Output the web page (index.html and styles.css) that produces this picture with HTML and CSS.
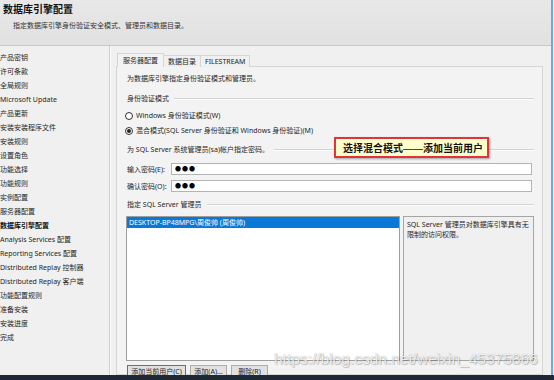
FILE: index.html
```html
<!DOCTYPE html>
<html lang="zh-CN">
<head>
<meta charset="utf-8">
<title>数据库引擎配置</title>
<link rel="stylesheet" href="styles.css">
</head>
<body>
<div class="screen">
  <div class="window">
    <header class="hdr">
      <h1>数据库引擎配置</h1>
      <p>指定数据库引擎身份验证安全模式、管理员和数据目录。</p>
    </header>
    <div class="main">
      <ul class="side">
        <li>产品密钥</li>
        <li>许可条款</li>
        <li>全局规则</li>
        <li>Microsoft Update</li>
        <li>产品更新</li>
        <li>安装安装程序文件</li>
        <li>安装规则</li>
        <li>设置角色</li>
        <li>功能选择</li>
        <li>功能规则</li>
        <li>实例配置</li>
        <li>服务器配置</li>
        <li class="cur">数据库引擎配置</li>
        <li>Analysis Services 配置</li>
        <li>Reporting Services 配置</li>
        <li>Distributed Replay 控制器</li>
        <li>Distributed Replay 客户端</li>
        <li>功能配置规则</li>
        <li>准备安装</li>
        <li>安装进度</li>
        <li>完成</li>
      </ul>
      <section class="content">
        <div class="tabs">
          <div class="tab active">服务器配置</div>
          <div class="tab">数据目录</div>
          <div class="tab">FILESTREAM</div>
        </div>
        <div class="panel">
          <p class="intro">为数据库引擎指定身份验证模式和管理员。</p>
          <div class="grp g1"><span>身份验证模式</span><i></i></div>
          <div class="radio r1"><b class="dot"></b><span>Windows 身份验证模式(W)</span></div>
          <div class="radio r2"><b class="dot on"></b><span>混合模式(SQL Server 身份验证和 Windows 身份验证)(M)</span></div>
          <div class="grp g2"><span>为 SQL Server 系统管理员(sa)帐户指定密码。</span><i></i></div>
          <div class="field f1"><label>输入密码(E):</label><div class="input">●●●</div></div>
          <div class="field f2"><label>确认密码(O):</label><div class="input">●●●</div></div>
          <div class="grp g3"><span>指定 SQL Server 管理员</span><i></i></div>
          <div class="admin">
            <div class="list"><div class="sel">DESKTOP-BP48MPG\周俊帅 (周俊帅)</div></div>
            <div class="desc">SQL Server 管理员对数据库引擎具有无限制的访问权限。</div>
          </div>
          <div class="btns">
            <div class="btn focus">添加当前用户(C)</div>
            <div class="btn">添加(A)...</div>
            <div class="btn">删除(R)</div>
          </div>
        </div>
      </section>
    </div>
  </div>
  <div class="taskbar"></div>
  <div class="callout">选择混合模式<span class="dash">——</span>添加当前用户</div>
  <div class="watermark">https://blog.csdn.net/weixin_45375866</div>
</div>
</body>
</html>
```
FILE: styles.css
```css
* { box-sizing: border-box; }
html, body { margin: 0; padding: 0; }
body {
  width: 554px;
  height: 380px;
  overflow: hidden;
  background: #f0f0f0;
  font-family: "Noto Sans", "Noto Sans CJK SC", sans-serif;
  font-size: 7px;
  color: #1f1f1f;
}
.screen {
  position: relative;
  width: 554px;
  height: 380px;
  display: flex;
  flex-direction: column;
}
.window {
  height: 375px;
  display: flex;
  flex-direction: column;
  border-right: 2px solid #6ea6de;
  margin-right: 1px;
  overflow: hidden;
}
.hdr {
  height: 46px;
  flex: none;
  border-bottom: 1px solid #c8c8c8;
  background: linear-gradient(#e8e8e8, #e1e1e1);
  padding: 2px 0 0 3px;
}
.hdr h1 {
  margin: 0;
  font-size: 10px;
  line-height: 14px;
  font-weight: 700;
  color: #111;
}
.hdr p {
  margin: 5px 0 0 10px;
  line-height: 10px;
  color: #333;
}
.main {
  flex: 1;
  display: flex;
  min-height: 0;
}
.side {
  list-style: none;
  margin: 0;
  padding: 5px 0 0 0;
  width: 110px;
  flex: none;
  border-right: 1px solid #cfcfcf;
  box-shadow: 1px 0 0 #fbfbfb;
  overflow: hidden;
}
.side li {
  line-height: 14px;
  height: 14px;
  white-space: nowrap;
  color: #262626;
}
.side li.cur { font-weight: 700; color: #111; }
.content {
  flex: 1;
  min-width: 0;
  display: flex;
  flex-direction: column;
  padding: 7px 8px 0 6px;
}
.tabs {
  display: flex;
  align-items: flex-end;
  height: 14px;
  margin-left: 1px;
  margin-bottom: -1px;
  position: relative;
  z-index: 1;
}
.tab {
  height: 12px;
  line-height: 11px;
  padding: 0 4px;
  border: 1px solid #d6d6d6;
  border-bottom: none;
  background: #f0f0f0;
  margin-left: -1px;
  white-space: nowrap;
}
.tab.active {
  height: 14px;
  line-height: 13px;
  padding: 0 5px;
  background: #f3f3f3;
  margin-left: 0;
  position: relative;
  z-index: 2;
}
.panel {
  flex: 1;
  min-height: 0;
  border: 1px solid #d6d6d6;
  background: #f3f3f3;
  padding: 0 8px 0 10px;
  display: flex;
  flex-direction: column;
}
.intro { margin: 7px 0 0 0; line-height: 10px; }
.grp {
  display: flex;
  align-items: center;
  gap: 5px;
  line-height: 10px;
  height: 10px;
}
.grp i {
  flex: 1;
  height: 2px;
  border-top: 1px solid #d3d3d3;
  border-bottom: 1px solid #fdfdfd;
}
.g1 { margin-top: 10px; }
.g2 { margin-top: 9px; }
.g3 { margin-top: 8px; }
.radio {
  display: flex;
  align-items: center;
  gap: 3px;
  height: 10px;
  line-height: 10px;
  margin-left: -2px;
}
.r1 { margin-top: 7px; }
.r2 { margin-top: 5px; }
.dot {
  width: 8px;
  height: 8px;
  border-radius: 50%;
  border: 1px solid #333;
  background: #fff;
  display: flex;
  align-items: center;
  justify-content: center;
}
.dot.on::after {
  content: "";
  width: 4px;
  height: 4px;
  border-radius: 50%;
  background: #222;
}
.field {
  display: flex;
  align-items: center;
  height: 12px;
  padding-right: 2px;
}
.f1 { margin-top: 8px; }
.f2 { margin-top: 5px; }
.field label { width: 44px; flex: none; }
.input {
  flex: 1;
  height: 12px;
  border: 1px solid #b4b4b4;
  background: #fff;
  font-size: 6px;
  line-height: 10px;
  letter-spacing: 1px;
  padding-left: 3px;
  color: #000;
}
.admin {
  margin-top: 6px;
  margin-left: -1px;
  display: flex;
  gap: 3px;
  height: 145px;
  flex: none;
}
.list {
  width: 274px;
  border: 1px solid #9e9e9e;
  background: #fff;
}
.sel {
  height: 11px;
  line-height: 11px;
  background: #0a78d7;
  color: #fff;
  padding-left: 2px;
  white-space: nowrap;
}
.desc {
  width: 131px;
  border: 1px solid #a6a6a6;
  background: #f0f0f0;
  padding: 3px 4px 0 3px;
  line-height: 10px;
}
.btns {
  margin-top: 4px;
  display: flex;
  gap: 4px;
  flex: none;
}
.btn {
  height: 14px;
  line-height: 9px;
  padding-top: 1px;
  border: 1px solid #adadad;
  background: #e1e1e1;
  text-align: center;
  white-space: nowrap;
  width: 37px;
}
.btn.focus {
  width: 59px;
  border-color: #2a7fd4;
}
.taskbar {
  height: 5px;
  background: #1d2935;
  flex: none;
}
.callout {
  position: absolute;
  left: 334px;
  top: 137px;
  width: 155px;
  height: 21px;
  border: 2px solid #e2333a;
  background: #ffffcc;
  box-shadow: 1px 1px 2px rgba(0,0,0,0.35);
  font-family: "Noto Sans CJK SC", sans-serif;
  font-size: 10px;
  font-weight: 700;
  line-height: 17px;
  padding-left: 7px;
  color: #111;
  white-space: nowrap;
}
.callout .dash {
  font-family: "Liberation Sans", sans-serif;
  font-weight: 400;
}
.watermark {
  position: absolute;
  left: 274px;
  top: 350px;
  font-family: "Liberation Sans", sans-serif;
  font-size: 15.5px;
  line-height: 18px;
  color: rgba(255,255,255,0.85);
  text-shadow: 0 0 1px rgba(0,0,0,0.35), 1px 1px 1px rgba(0,0,0,0.2);
  white-space: nowrap;
}
```
